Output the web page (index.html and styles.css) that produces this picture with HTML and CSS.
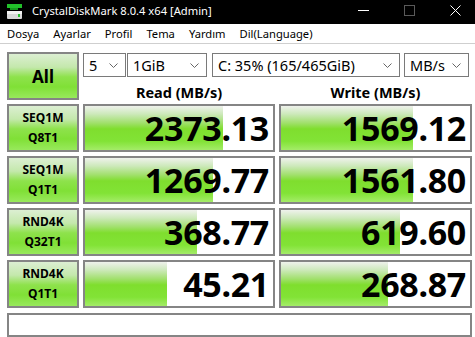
FILE: index.html
```html
<!DOCTYPE html>
<html lang="tr">
<head>
    <meta charset="UTF-8">
    <title>CrystalDiskMark 8.0.4 x64 [Admin]</title>
    <link rel="stylesheet" href="styles.css">
</head>
<body>
    <!-- Title bar -->
    <div class="titlebar">
        <svg class="app-icon" width="16" height="16" viewBox="0 0 16 16">
            <rect x="1" y="0" width="15" height="4" fill="#22c02a"/>
            <rect x="4" y="4" width="8" height="2" fill="#159a1d"/>
            <rect x="1" y="7" width="15" height="8" rx="1" fill="#d8d8d8"/>
            <rect x="1" y="7" width="15" height="3" fill="#f2f2f2"/>
            <rect x="12" y="10" width="2" height="3" fill="#2bc233"/>
        </svg>
        <span class="title">CrystalDiskMark 8.0.4 x64 [Admin]</span>
        <div class="controls">
            <svg width="11" height="11" viewBox="0 0 11 11"><line x1="0" y1="5.5" x2="11" y2="5.5" stroke="#fff"/></svg>
            <svg class="disabled" width="11" height="11" viewBox="0 0 11 11"><rect x="0.5" y="0.5" width="10" height="10" fill="none" stroke="#5a5a5a"/></svg>
            <svg width="11" height="11" viewBox="0 0 11 11"><path d="M0.5 0.5L10.5 10.5M10.5 0.5L0.5 10.5" stroke="#fff"/></svg>
        </div>
    </div>

    <!-- Menu -->
    <div class="menubar">
        <span>Dosya</span>
        <span>Ayarlar</span>
        <span>Profil</span>
        <span>Tema</span>
        <span>Yardım</span>
        <span>Dil(Language)</span>
    </div>

    <div class="main">
        <div class="grid">
            <div class="btn all">All</div>
            <div class="head">
                <div class="selects">
                    <div class="select s-count">5<svg class="chev" width="9" height="5" viewBox="0 0 9 5"><path d="M0.5 0.5L4.5 4.5L8.5 0.5" fill="none" stroke="#666"/></svg></div>
                    <div class="select s-size">1GiB<svg class="chev" width="9" height="5" viewBox="0 0 9 5"><path d="M0.5 0.5L4.5 4.5L8.5 0.5" fill="none" stroke="#666"/></svg></div>
                    <div class="select s-drive">C: 35% (165/465GiB)<svg class="chev" width="9" height="5" viewBox="0 0 9 5"><path d="M0.5 0.5L4.5 4.5L8.5 0.5" fill="none" stroke="#666"/></svg></div>
                    <div class="select s-unit">MB/s<svg class="chev" width="9" height="5" viewBox="0 0 9 5"><path d="M0.5 0.5L4.5 4.5L8.5 0.5" fill="none" stroke="#666"/></svg></div>
                </div>
                <div class="labels">
                    <div class="col-title">Read (MB/s)</div>
                    <div class="col-title">Write (MB/s)</div>
                </div>
            </div>

            <div class="btn test">SEQ1M<br>Q8T1</div>
            <div class="result" style="background-size: 138px 100%">2373.13</div>
            <div class="result" style="background-size: 132px 100%">1569.12</div>

            <div class="btn test">SEQ1M<br>Q1T1</div>
            <div class="result" style="background-size: 128px 100%">1269.77</div>
            <div class="result" style="background-size: 132px 100%">1561.80</div>

            <div class="btn test">RND4K<br>Q32T1</div>
            <div class="result" style="background-size: 112px 100%">368.77</div>
            <div class="result" style="background-size: 119px 100%">619.60</div>

            <div class="btn test">RND4K<br>Q1T1</div>
            <div class="result" style="background-size: 82px 100%">45.21</div>
            <div class="result" style="background-size: 107px 100%">268.87</div>
        </div>
        <div class="status"></div>
    </div>
</body>
</html>
```

FILE: styles.css
```css
* {
    box-sizing: border-box;
    margin: 0;
    padding: 0;
}
body {
    width: 475px;
    height: 337px;
    overflow: hidden;
    background-color: #fff;
    font-family: 'Noto Sans', sans-serif;
    color: #000;
}
.titlebar {
    height: 24px;
    background-color: #000;
    color: #fff;
    display: flex;
    align-items: flex-start;
    padding: 3px 0 0 6px;
}
.app-icon {
    margin-top: 1px;
}
.title {
    margin-left: 10px;
    font-size: 11.2px;
    line-height: 16px;
}
.controls {
    margin-left: auto;
    display: flex;
    gap: 35px;
    padding: 2px 14px 0 0;
}
.menubar {
    height: 20px;
    display: flex;
    gap: 14px;
    padding: 0 7px;
    font-size: 11.2px;
    line-height: 19px;
    border-bottom: 1px solid #cfcfcf;
}
.main {
    padding: 8px 4px 0 7px;
}
.grid {
    display: grid;
    grid-template-columns: 72px 192px 193px;
    grid-auto-rows: 48px;
    column-gap: 4px;
    row-gap: 4px;
}
.btn {
    border: 2px solid #858585;
    background: linear-gradient(to bottom, #dcefd2 0%, #c4e8ac 30%, #8ee24c 52%, #80e036 75%, #98e95c 100%);
    display: flex;
    align-items: center;
    justify-content: center;
    text-align: center;
    font-weight: bold;
}
.all {
    font-size: 17px;
}
.test {
    font-size: 12px;
    line-height: 20px;
}
.head {
    grid-column: 2 / 4;
    display: flex;
    flex-direction: column;
    padding-top: 1px;
}
.selects {
    display: flex;
    height: 24px;
}
.select {
    border: 1px solid #7a7a7a;
    font-size: 14.5px;
    line-height: 22px;
    padding-left: 5px;
    display: flex;
    align-items: center;
    justify-content: space-between;
    padding-right: 7px;
}
.s-count { width: 43px; }
.s-size { width: 80px; margin-left: 1px; }
.s-drive { width: 188px; margin-left: 5px; }
.s-unit { width: 65px; margin-left: 4px; }
.labels {
    display: grid;
    grid-template-columns: 192px 193px;
    column-gap: 4px;
    margin-top: 5px;
}
.col-title {
    text-align: center;
    font-weight: bold;
    font-size: 14.5px;
    line-height: 20px;
}
.result {
    border: 2px solid #858585;
    background-color: #fff;
    background-image: linear-gradient(to bottom, #eff2ec 0%, #cde9bb 18%, #a2e06e 38%, #7fde2e 52%, #82e336 80%, #a4ec68 100%);
    background-repeat: no-repeat;
    text-align: right;
    font-weight: bold;
    font-size: 34px;
    line-height: 44px;
    padding-right: 4px;
    letter-spacing: -0.3px;
}
.status {
    margin-top: 5px;
    height: 24px;
    width: 465px;
    border: 2px solid #858585;
}
```
